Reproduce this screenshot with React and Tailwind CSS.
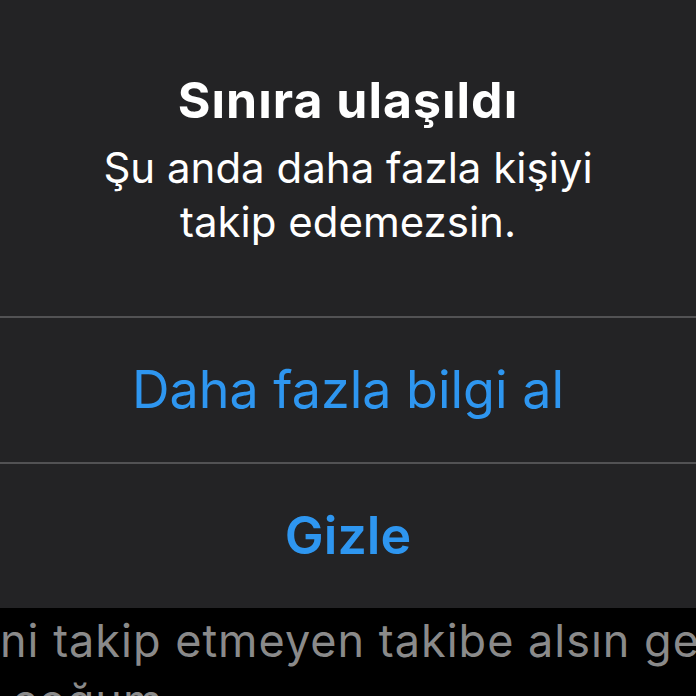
import React from "react";

export default function App() {
  return (
    <div className="w-[696px] h-[696px] overflow-hidden bg-black flex flex-col" style={{ fontFamily: "Inter, 'Noto Sans', sans-serif" }}>
      <div className="h-[608px] bg-[#232325] flex flex-col">
        <div className="h-[316px] flex flex-col items-center pt-[71px]">
          <div className="text-[50px] leading-[58px] font-bold tracking-[1px] text-white">Sınıra ulaşıldı</div>
          <div className="mt-[12px] text-[42px] leading-[54px] text-white text-center">
            Şu anda daha fazla kişiyi
            <br />
            takip edemezsin.
          </div>
        </div>
        <div className="h-[2px] bg-[#525254]" />
        <div className="h-[144px] flex items-center justify-center text-[52px] leading-[144px] text-[#2e96f0]">
          Daha fazla bilgi al
        </div>
        <div className="h-[2px] bg-[#525254]" />
        <div className="h-[144px] flex items-center justify-center text-[52px] leading-[144px] font-semibold text-[#2e96f0]">
          Gizle
        </div>
      </div>
      <div className="flex-1 pt-[3px] text-[45px] leading-[60px] tracking-[1px] text-[#8a8a8a] whitespace-nowrap overflow-hidden">
        <div>ni takip etmeyen takibe alsın gerisi</div>
        <div className="pl-[12px]">coğum</div>
      </div>
    </div>
  );
}
